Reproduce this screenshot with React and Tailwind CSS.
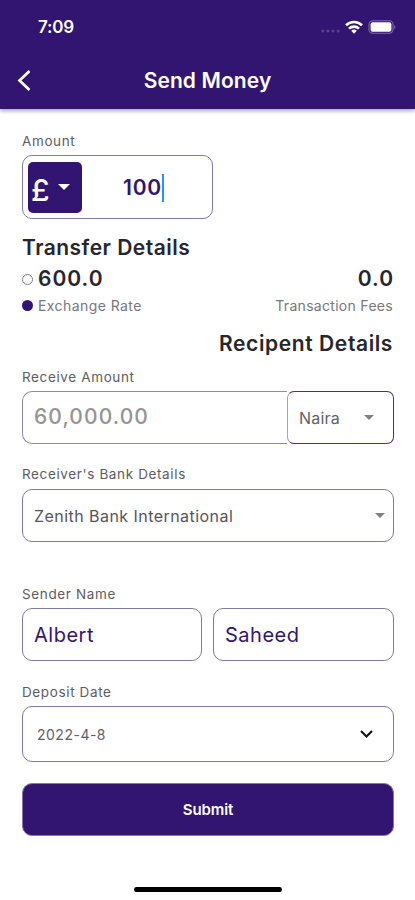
import React from "react";

const Caret = ({ className }) => (
  <svg viewBox="0 0 10 5" className={className} fill="currentColor">
    <path d="M0 0h10L5 5z" />
  </svg>
);

const Label = ({ children, className = "" }) => (
  <div
    className={`h-5 leading-5 text-[13.5px] tracking-[0.63px] text-[#5c5c62] whitespace-nowrap ${className}`}
  >
    {children}
  </div>
);

const StatusBar = () => (
  <div className="flex items-center justify-between h-[54px] pl-[38px] pr-[19px]">
    <span className="text-[17px] font-semibold leading-5 tracking-[-0.2px]">7:09</span>
    <div className="flex items-center">
      <svg width="19" height="4" viewBox="0 0 19 4" className="mt-2 mr-[5px]" fill="#59438f">
        <circle cx="1.8" cy="2" r="1.5" />
        <circle cx="6.9" cy="2" r="1.5" />
        <circle cx="12" cy="2" r="1.5" />
        <circle cx="17.1" cy="2" r="1.5" />
      </svg>
      <svg width="18" height="14" viewBox="0 0 18 14" fill="none" stroke="white" strokeWidth="2.6">
        <path d="M1 5.2a11.6 11.6 0 0 1 16 0" />
        <path d="M4 8.6a7.2 7.2 0 0 1 10 0" />
        <path d="M9 13.7l-2.8-2.9a4 4 0 0 1 5.6 0z" fill="white" stroke="none" />
      </svg>
      <svg width="28" height="14" viewBox="0 0 28 14" className="ml-[5px]">
        <rect x="1" y="0.8" width="24" height="12.4" rx="3.6" fill="none" stroke="#7c69aa" strokeWidth="1.1" />
        <rect x="2.6" y="2.2" width="20.8" height="9.6" rx="2" fill="white" />
        <path d="M26.2 5c1.7.6 1.7 3.4 0 4z" fill="#7c69aa" />
      </svg>
    </div>
  </div>
);

const Header = () => (
  <header className="h-[109px] bg-[#321471] text-white shadow-[0_2px_4px_rgba(0,0,0,0.35)]">
    <StatusBar />
    <div className="grid grid-cols-[60px_1fr_60px] items-center h-[53px]">
      <svg width="13" height="21" viewBox="0 0 13 21" className="ml-[17px]" fill="none" stroke="white" strokeWidth="2.7">
        <path d="M12.5 1L2.5 10.5L12.5 20" />
      </svg>
      <h1 className="text-center text-[21px] font-semibold tracking-[0.1px]">Send Money</h1>
    </div>
  </header>
);

const App = () => {
  return (
    <div className="w-full h-[900px] overflow-hidden bg-white font-['Inter',sans-serif]">
      <Header />
      <main className="pl-[22px] pr-[21px] pt-[22px]">
        <Label>Amount</Label>
        <div className="mt-1 flex items-center w-[191px] h-16 pl-[5px] rounded-[10px] border border-[#8378a5]">
          <div className="flex items-center w-[54px] h-[51px] pl-[3px] rounded-[5px] bg-[#321471] text-white">
            <span className="mt-[6px] w-[19px] text-[30px] font-medium leading-none">£</span>
            <Caret className="ml-[8px] w-[12px] h-[6px]" />
          </div>
          <div className="mt-[2px] ml-[41px] flex items-center text-[#321471]">
            <span className="text-[21px] font-semibold tracking-[0.8px]">100</span>
            <span className="w-[2px] h-[28px] bg-[#2e93ee]" />
          </div>
        </div>

        <h2 className="mt-[15px] h-7 leading-7 text-[21px] font-semibold tracking-[0.47px] text-[#26262e]">
          Transfer Details
        </h2>
        <div className="mt-[3px] h-7 flex items-center justify-between text-[21px] font-semibold tracking-[1px] text-[#26262e]">
          <div className="flex items-center gap-[5px]">
            <span className="size-[11px] rounded-full border-[1.5px] border-[#7c7791]" />
            <span>600.0</span>
          </div>
          <span>0.0</span>
        </div>
        <div className="mt-[2px] h-5 flex items-center justify-between text-[14px] text-[#77777c]">
          <div className="flex items-center gap-[5px]">
            <span className="size-[11px] rounded-full bg-[#321471]" />
            <span className="tracking-[0.43px]">Exchange Rate</span>
          </div>
          <span className="mr-px tracking-[0.3px]">Transaction Fees</span>
        </div>
        <h2 className="mt-[15px] mr-px h-7 leading-7 text-right text-[21px] font-semibold tracking-[0.6px] text-[#26262e]">
          Recipent Details
        </h2>

        <Label className="mt-[9px]">Receive Amount</Label>
        <div className="mt-1 flex h-[53px]">
          <div className="flex-1 flex items-center pb-[2px] pl-[11px] rounded-l-[10px] border border-r-0 border-[#9089a8] text-[21px] font-medium tracking-[1.1px] text-[#949494]">
            60,000.00
          </div>
          <div className="flex items-center justify-between w-[107px] pl-[11px] pr-[19px] rounded-[7px] border-[1.5px] border-[#47327f] border-l-[#a6a3b2] text-[16px] tracking-[0.2px] text-[#606066]">
            <span>Naira</span>
            <Caret className="w-[10px] h-[5px] text-[#808080]" />
          </div>
        </div>

        <Label className="mt-5">Receiver's Bank Details</Label>
        <div className="mt-[5px] flex items-center justify-between h-[53px] pl-[11px] pr-[8px] rounded-[10px] border border-[#8378a5] text-[16px] tracking-[0.45px] text-[#55555b]">
          <span>Zenith Bank International</span>
          <Caret className="w-[10px] h-[5px] text-[#808080]" />
        </div>

        <Label className="mt-[42px]">Sender Name</Label>
        <div className="mt-1 grid grid-cols-[180px_1fr] gap-[11px] text-[20px] tracking-[0.5px] text-[#321471]">
          <div className="flex items-center h-[53px] pl-[11px] rounded-[10px] border border-[#8378a5]">Albert</div>
          <div className="flex items-center h-[53px] pl-[11px] rounded-[10px] border border-[#8378a5]">Saheed</div>
        </div>

        <Label className="mt-[21px]">Deposit Date</Label>
        <div className="mt-1 flex items-center justify-between h-14 pl-[14px] pr-[20px] rounded-[10px] border border-[#8378a5]">
          <span className="text-[14px] tracking-[0.5px] text-[#606066]">2022-4-8</span>
          <svg width="13" height="8" viewBox="0 0 13 8" fill="none" stroke="#111" strokeWidth="2">
            <path d="M1 1l5.5 5.5L12 1" />
          </svg>
        </div>

        <button className="mt-[21px] block w-full h-[53px] pt-[2px] rounded-[10px] border border-[#8378a5] bg-[#321471] text-[15px] font-semibold tracking-[-0.1px] text-white">
          Submit
        </button>
      </main>
      <div className="mt-[51px] mx-auto w-[148px] h-[5px] rounded-full bg-black" />
    </div>
  );
};

export default App;
